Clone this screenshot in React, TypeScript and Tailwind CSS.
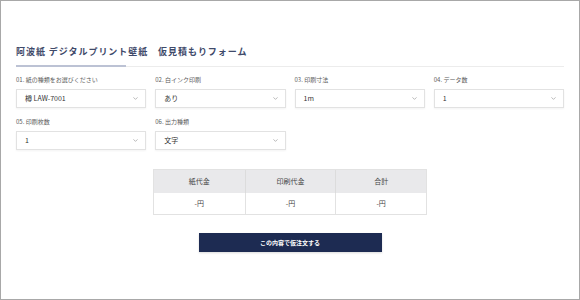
import { ChevronDown } from "lucide-react";

const fields = [
  { label: "01. 紙の種類をお選びください", value: "樽 LAW-7001" },
  { label: "02. 白インク印刷", value: "あり" },
  { label: "03. 印刷寸法", value: "1m" },
  { label: "04. データ数", value: "1" },
  { label: "05. 印刷枚数", value: "1" },
  { label: "06. 出力種類", value: "文字" },
];

function SelectBox({ label, value }: { label: string; value: string }) {
  return (
    <div className="flex flex-col">
      <label className="h-[8px] text-[6px] leading-[8px] text-[#5a5a5a]">{label}</label>
      <div className="mt-[5px] flex h-[19px] items-center justify-between border border-[#e2e2e2] bg-white pl-[8px] pr-[6px] shadow-[0_1px_2px_rgba(0,0,0,0.05)]">
        <span className="text-[7px] leading-none text-[#333]">{value}</span>
        <ChevronDown size={7} strokeWidth={2} className="text-[#888]" />
      </div>
    </div>
  );
}

export default function App() {
  const cols = ["紙代金", "印刷代金", "合計"];

  return (
    <div
      className="h-[300px] w-[580px] border border-[#a8a8a8] bg-white px-[15px] pt-[45px]"
      style={{ fontFamily: "'Noto Sans CJK JP', 'Noto Sans', sans-serif" }}
    >
      <h1 className="h-[12px] text-[9px] font-bold leading-[12px] tracking-[0.95px] text-[#3f4a6a]">
        阿波紙 デジタルプリント壁紙　仮見積もりフォーム
      </h1>

      <div className="mt-[7px] flex items-end">
        <div className="h-[2px] w-[110px] bg-[#bcc2d4]" />
        <div className="h-px flex-1 bg-[#ececec]" />
      </div>

      <div className="mt-[9px] grid grid-cols-4 gap-x-[9px] gap-y-[10px]">
        {fields.map((f) => (
          <SelectBox key={f.label} label={f.label} value={f.value} />
        ))}
      </div>

      <div className="mx-auto mt-[19px] w-[274px] border border-[#e2e2e2]">
        <div className="grid grid-cols-3 bg-[#e9e9eb]">
          {cols.map((c, i) => (
            <div
              key={c}
              className={`flex h-[23px] items-center justify-center text-[7px] text-[#444] ${i > 0 ? "border-l border-[#dcdcdc]" : ""}`}
            >
              {c}
            </div>
          ))}
        </div>
        <div className="grid grid-cols-3 bg-white">
          {cols.map((c, i) => (
            <div
              key={c}
              className={`flex h-[21px] items-center justify-center text-[7px] text-[#444] ${i > 0 ? "border-l border-[#e2e2e2]" : ""}`}
            >
              -円
            </div>
          ))}
        </div>
      </div>

      <div className="mt-[18px] flex justify-center">
        <button className="h-[19px] w-[183px] bg-[#1d2b52] text-[6px] font-bold text-white shadow-[0_1px_2px_rgba(0,0,0,0.15)]">
          この内容で仮注文する
        </button>
      </div>
    </div>
  );
}
